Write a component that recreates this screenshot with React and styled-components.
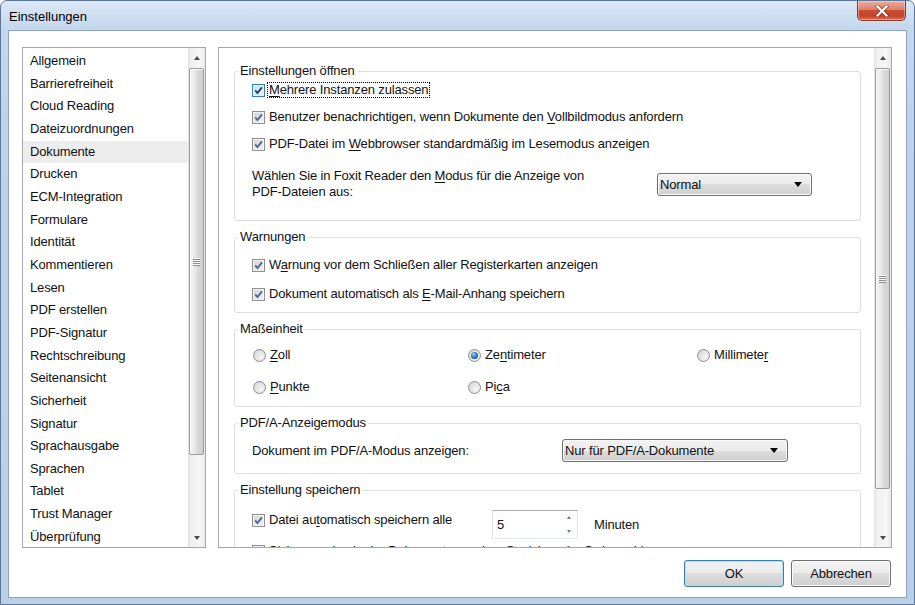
import React from 'react';
import styled, { createGlobalStyle } from 'styled-components';

const categories = [
  'Allgemein', 'Barrierefreiheit', 'Cloud Reading', 'Dateizuordnungen', 'Dokumente',
  'Drucken', 'ECM-Integration', 'Formulare', 'Identität', 'Kommentieren', 'Lesen',
  'PDF erstellen', 'PDF-Signatur', 'Rechtschreibung', 'Seitenansicht', 'Sicherheit',
  'Signatur', 'Sprachausgabe', 'Sprachen', 'Tablet', 'Trust Manager', 'Überprüfung',
];

const Check = ({ hot }) => (
  <Box $hot={hot}>
    <svg width="9" height="9" viewBox="0 0 9 9">
      <path d="M1.2 4.4 L3.5 7 L7.9 1.4" fill="none" stroke={hot ? '#1d3a78' : '#4c6595'} strokeWidth="1.8" />
    </svg>
  </Box>
);

const CheckRow = ({ hot, focus, children }) => (
  <Row>
    <Check hot={hot} />
    <Label $focus={focus}>{children}</Label>
  </Row>
);

const RadioRow = ({ on, children }) => (
  <Row>
    <RadioDot $on={on} />
    <Label>{children}</Label>
  </Row>
);

const ScrollBar = ({ thumb }) => (
  <Scroll>
    <ScrollArrow><Tri $up /></ScrollArrow>
    <Track>
      <Thumb $h={thumb}><Grip /></Thumb>
    </Track>
    <ScrollArrow><Tri /></ScrollArrow>
  </Scroll>
);

const Dropdown = ({ width, children }) => (
  <Combo $w={width}>
    <span>{children}</span>
    <ComboArrow />
  </Combo>
);

const App = () => {
  return (
    <>
      <GlobalStyle />
      <Window>
        <TitleBar>
          <Title>Einstellungen</Title>
          <CloseButton>
            <svg width="14" height="12" viewBox="0 0 14 12">
              <path d="M2.5 1.5 L11.5 10.5 M11.5 1.5 L2.5 10.5" stroke="#5a1a10" strokeWidth="4" strokeLinecap="square" opacity="0.5" />
              <path d="M2.5 1.5 L11.5 10.5 M11.5 1.5 L2.5 10.5" stroke="#fff" strokeWidth="2.2" strokeLinecap="square" />
            </svg>
          </CloseButton>
        </TitleBar>

        <Client>
          <Body>
            <ListBox>
              <ListItems>
                {categories.map((c) => (
                  <ListItem key={c} $selected={c === 'Dokumente'}>{c}</ListItem>
                ))}
              </ListItems>
              <ScrollBar thumb={387} />
            </ListBox>

            <Panel>
              <PanelContent>
                <Group>
                  <Legend>Einstellungen öffnen</Legend>
                  <GroupBody $pt={0} $pb={20} $gap={3}>
                    <CheckRow hot focus><u>M</u>ehrere Instanzen zulassen</CheckRow>
                    <CheckRow>Benutzer benachrichtigen, wenn Dokumente den <u>V</u>ollbildmodus anfordern</CheckRow>
                    <CheckRow>PDF-Datei im <u>W</u>ebbrowser standardmäßig im Lesemodus anzeigen</CheckRow>
                    <ModeRow>
                      <ModeText>
                        Wählen Sie in Foxit Reader den <u>M</u>odus für die Anzeige von<br />
                        PDF-Dateien aus:
                      </ModeText>
                      <Dropdown width={155}>Normal</Dropdown>
                    </ModeRow>
                  </GroupBody>
                </Group>

                <Group>
                  <Legend>Warnungen</Legend>
                  <GroupBody $pt={9} $pb={6} $gap={5}>
                    <CheckRow>W<u>a</u>rnung vor dem Schließen aller Registerkarten anzeigen</CheckRow>
                    <CheckRow>Dokument automatisch als <u>E</u>-Mail-Anhang speichern</CheckRow>
                  </GroupBody>
                </Group>

                <Group>
                  <Legend>Maßeinheit</Legend>
                  <UnitGrid>
                    <RadioRow><u>Z</u>oll</RadioRow>
                    <RadioRow on>Ze<u>n</u>timeter</RadioRow>
                    <RadioRow>Millimete<u>r</u></RadioRow>
                    <RadioRow><u>P</u>unkte</RadioRow>
                    <RadioRow>Pi<u>c</u>a</RadioRow>
                  </UnitGrid>
                </Group>

                <Group>
                  <Legend>PDF/A-Anzeigemodus</Legend>
                  <GroupBody $pt={9} $pb={11} $gap={0}>
                    <FieldRow>
                      <FieldLabel $w={310}>Dokument im PDF/A-Modus anzeigen:</FieldLabel>
                      <Dropdown width={226}>Nur für PDF/A-Dokumente</Dropdown>
                    </FieldRow>
                  </GroupBody>
                </Group>

                <Group>
                  <Legend>Einstellung speichern</Legend>
                  <GroupBody $pt={13} $pb={10} $gap={0}>
                    <FieldRow $top>
                      <FieldLabel $w={240}>
                        <CheckRow>Datei au<u>t</u>omatisch speichern alle</CheckRow>
                      </FieldLabel>
                      <Spin>
                        <span>5</span>
                        <SpinButtons>
                          <SpinHalf><SmallTri $up /></SpinHalf>
                          <SpinHalf><SmallTri /></SpinHalf>
                        </SpinButtons>
                      </Spin>
                      <Unit>Minuten</Unit>
                    </FieldRow>
                    <CheckRow>Sicherungskopie der Dokumente vor dem Speichern im Ordner ablegen</CheckRow>
                  </GroupBody>
                </Group>
              </PanelContent>
              <ScrollBar thumb={421} />
            </Panel>
          </Body>

          <Footer>
            <Button $default>OK</Button>
            <Button>Abbrechen</Button>
          </Footer>
        </Client>
      </Window>
    </>
  );
};

const GlobalStyle = createGlobalStyle`
  html, body {
    margin: 0;
    padding: 0;
    background: #fff;
  }
  body {
    font-family: "Liberation Sans", Arial, sans-serif;
    font-size: 13px;
    letter-spacing: -0.15px;
    color: #111;
  }
  u {
    text-decoration-thickness: 1px;
    text-underline-offset: 2px;
  }
`;

const Window = styled.div`
  width: 915px;
  height: 605px;
  box-sizing: border-box;
  display: flex;
  flex-direction: column;
  padding: 0 7px 6px 7px;
  border: 1px solid #5d7596;
  border-radius: 7px 7px 0 0;
  background: linear-gradient(#dbe8f6 0px, #c4d7ed 28px, #bed3eb 120px, #b9cfe8 100%);
`;

const TitleBar = styled.div`
  height: 29px;
  display: flex;
  justify-content: space-between;
  align-items: flex-start;
`;

const Title = styled.div`
  margin: 8px 0 0 1px;
  font-size: 13px;
  line-height: 15px;
  letter-spacing: 0;
  color: #000;
`;

const CloseButton = styled.div`
  width: 49px;
  height: 20px;
  box-sizing: border-box;
  margin-right: 1px;
  display: flex;
  align-items: center;
  justify-content: center;
  border: 1px solid #8a3b2e;
  border-top: none;
  border-radius: 0 0 5px 5px;
  background: linear-gradient(#e9ad9f, #dc826d 45%, #cb4e35 50%, #c8432a 80%, #d87458);
  box-shadow: inset 0 0 0 1px rgba(255, 255, 255, 0.35);
`;

const Client = styled.div`
  flex: 1;
  display: flex;
  flex-direction: column;
  padding: 16px 14px 10px 13px;
  border: 1px solid #8da4c0;
  background: #fff;
`;

const Body = styled.div`
  height: 501px;
  display: flex;
  gap: 12px;
`;

const ListBox = styled.div`
  width: 184px;
  box-sizing: border-box;
  display: flex;
  border: 1px solid #a3a6ad;
`;

const ListItems = styled.div`
  flex: 1;
  padding-top: 2px;
  overflow: hidden;
`;

const ListItem = styled.div`
  height: 22.67px;
  line-height: 22.67px;
  padding-left: 7px;
  white-space: nowrap;
  background: ${(p) => (p.$selected ? '#ededed' : 'transparent')};
`;

const Scroll = styled.div`
  width: 17px;
  flex: none;
  display: flex;
  flex-direction: column;
  background: linear-gradient(to right, #e3e3e3, #f1f1f1 20%, #f6f6f6 70%, #eaeaea);
`;

const ScrollArrow = styled.div`
  height: 19px;
  flex: none;
  display: flex;
  align-items: center;
  justify-content: center;
`;

const Tri = styled.span`
  width: 0;
  height: 0;
  border-left: 3.5px solid transparent;
  border-right: 3.5px solid transparent;
  ${(p) => (p.$up ? 'border-bottom: 4px solid #4a4a4a;' : 'border-top: 4px solid #4a4a4a;')}
`;

const Track = styled.div`
  flex: 1;
  padding: 1px 1px 0 1px;
`;

const Thumb = styled.div`
  height: ${(p) => p.$h}px;
  box-sizing: border-box;
  display: flex;
  align-items: center;
  justify-content: center;
  border: 1px solid #9a9a9a;
  border-radius: 2px;
  background: linear-gradient(to right, #f4f4f4, #e6e6e6 45%, #d9d9d9 55%, #d0d0d0);
  box-shadow: inset 1px 1px 0 #fbfbfb;
`;

const Grip = styled.span`
  width: 7px;
  height: 8px;
  background: repeating-linear-gradient(#f7f7f7 0 1px, #8c8c8c 1px 2px);
`;

const Panel = styled.div`
  flex: 1;
  display: flex;
  border: 1px solid #a3a6ad;
`;

const PanelContent = styled.div`
  flex: 1;
  overflow: hidden;
  padding-top: 16px;
  display: flex;
  flex-direction: column;
  gap: 9px;
`;

const Group = styled.fieldset`
  margin: 0 13px 0 15px;
  padding: 0;
  min-width: 0;
  border: 1px solid #dedede;
  border-radius: 3px;
  flex: none;
`;

const Legend = styled.legend`
  margin-left: 3px;
  padding: 0 2px;
  font-size: 13px;
  line-height: 14px;
`;

const GroupBody = styled.div`
  display: flex;
  flex-direction: column;
  gap: ${(p) => p.$gap}px;
  padding: ${(p) => p.$pt}px 0 ${(p) => p.$pb}px 17px;
`;

const Row = styled.div`
  height: 24px;
  display: flex;
  align-items: center;
  gap: 2px;
  white-space: nowrap;
`;

const Box = styled.span`
  width: 13px;
  height: 13px;
  flex: none;
  box-sizing: border-box;
  display: grid;
  place-items: center;
  border: 1px solid ${(p) => (p.$hot ? '#3c7fb1' : '#8e8f8f')};
  background: ${(p) =>
    p.$hot
      ? 'linear-gradient(135deg, #c3e2f6, #eef8fe)'
      : 'linear-gradient(135deg, #d2d2d2, #f5f5f5)'};
  box-shadow: inset 0 0 0 1px ${(p) => (p.$hot ? '#def1fb' : '#f4f4f4')};
`;

const RadioDot = styled.span`
  width: 13px;
  height: 13px;
  flex: none;
  box-sizing: border-box;
  margin-left: 1px;
  border-radius: 50%;
  display: grid;
  place-items: center;
  border: 1px solid #8e8f8f;
  background: radial-gradient(circle at 65% 65%, #f6f6f6, #d0d0d0);
  &::after {
    content: '';
    display: ${(p) => (p.$on ? 'block' : 'none')};
    width: 7px;
    height: 7px;
    border-radius: 50%;
    background: radial-gradient(circle at 40% 35%, #a8d6f7 0, #3a86c8 40%, #124a8a 80%);
  }
`;

const Label = styled.span`
  padding: 0 1px;
  line-height: 14px;
  border: 1px dotted ${(p) => (p.$focus ? '#000' : 'transparent')};
`;

const ModeRow = styled.div`
  margin-top: 9px;
  display: flex;
  align-items: flex-start;
`;

const ModeText = styled.div`
  width: 405px;
  line-height: 16px;
`;

const Combo = styled.div`
  width: ${(p) => p.$w}px;
  height: 23px;
  margin-top: 5px;
  box-sizing: border-box;
  display: flex;
  align-items: center;
  justify-content: space-between;
  padding: 0 9px 0 2px;
  border: 1px solid #707070;
  border-radius: 3px;
  background: linear-gradient(#f2f2f2, #ebebeb 50%, #dddddd 50%, #cfcfcf);
  box-shadow: inset 0 0 0 1px #fafafa;
`;

const ComboArrow = styled.span`
  width: 0;
  height: 0;
  border-left: 4px solid transparent;
  border-right: 4px solid transparent;
  border-top: 5px solid #000;
`;

const UnitGrid = styled.div`
  display: grid;
  grid-template-columns: 215px 229px auto;
  row-gap: 8px;
  padding: 7px 0 7px 17px;
`;

const FieldRow = styled.div`
  display: flex;
  align-items: ${(p) => (p.$top ? 'flex-start' : 'center')};
  & ${Combo} {
    margin-top: 0;
  }
`;

const FieldLabel = styled.div`
  width: ${(p) => p.$w}px;
  flex: none;
  & ${Row} {
    height: 20px;
  }
`;

const Spin = styled.div`
  width: 86px;
  height: 29px;
  box-sizing: border-box;
  display: flex;
  align-items: center;
  justify-content: space-between;
  padding-left: 4px;
  border: 1px solid;
  border-color: #abadb3 #dbdfe6 #e3e9ef #e2e3ea;
  background: #fff;
`;

const SpinButtons = styled.div`
  width: 17px;
  align-self: stretch;
  display: flex;
  flex-direction: column;
`;

const SpinHalf = styled.div`
  flex: 1;
  display: grid;
  place-items: center;
`;

const SmallTri = styled.span`
  width: 0;
  height: 0;
  border-left: 2.5px solid transparent;
  border-right: 2.5px solid transparent;
  ${(p) => (p.$up ? 'border-bottom: 3px solid #7a7a7a;' : 'border-top: 3px solid #7a7a7a;')}
`;

const Unit = styled.span`
  margin: 7px 0 0 16px;
  line-height: 16px;
`;

const Footer = styled.div`
  margin-top: 12px;
  display: flex;
  justify-content: flex-end;
  gap: 7px;
  padding-right: 1px;
`;

const Button = styled.div`
  width: 100px;
  height: 27px;
  box-sizing: border-box;
  display: flex;
  align-items: center;
  justify-content: center;
  border: 1px solid ${(p) => (p.$default ? '#3c7fb1' : '#707070')};
  border-radius: 3px;
  background: linear-gradient(#f2f2f2, #ebebeb 50%, #dddddd 50%, #cfcfcf);
  box-shadow: inset 0 0 0 1px ${(p) => (p.$default ? '#b5dcf5' : '#fbfbfb')};
  font-size: 13px;
`;

export default App;
